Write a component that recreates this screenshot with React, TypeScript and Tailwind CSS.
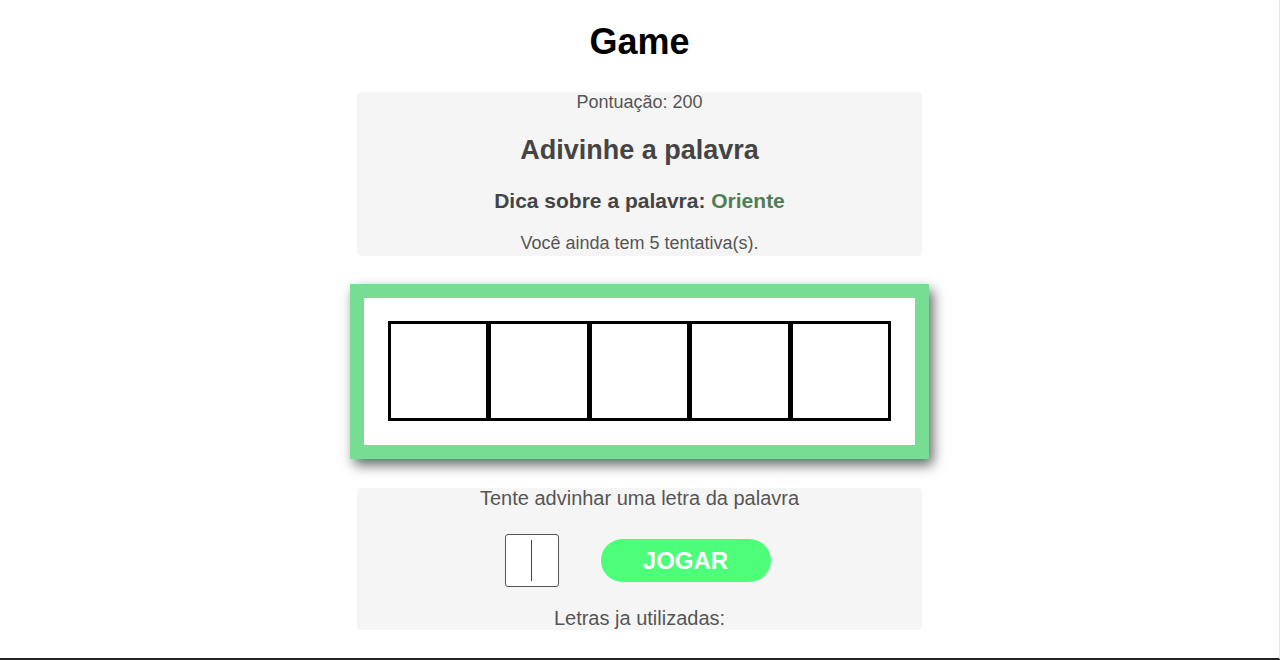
import React from "react";

export default function App() {
  return (
    <div
      className="h-[660px] w-full bg-white border-b-2 border-[#222] border-r border-r-[#e6e6e6] flex flex-col items-center overflow-hidden"
      style={{ fontFamily: '"Liberation Sans", Arial, sans-serif' }}
    >
      <h1 className="mt-[21px] text-[36px] leading-[41px] font-bold text-black">Game</h1>

      <div className="mt-[30px] w-[565px] h-[164px] bg-[#f5f5f5] rounded-[4px] flex flex-col items-center">
        <p className="text-[18px] leading-[21px] text-[#555]">Pontuação: 200</p>
        <h2 className="mt-[22px] text-[27px] leading-[31px] font-bold text-[#444]">Adivinhe a palavra</h2>
        <h3 className="mt-[23px] text-[21px] leading-[24px] font-bold text-[#444]">
          Dica sobre a palavra: <span className="text-[#4e7d58]">Oriente</span>
        </h3>
        <p className="mt-[20px] text-[18px] leading-[21px] text-[#555]">Você ainda tem 5 tentativa(s).</p>
      </div>

      <div className="mt-[28px] border-[14px] border-[#77dd93] bg-white pt-[23px] pb-[24px] px-[24px] shadow-[4px_6px_12px_rgba(0,0,0,0.6)]">
        <div className="flex w-[503px] h-[100px]">
          {[0, 1, 2, 3, 4].map((i) => (
            <div
              key={i}
              className={`flex-1 h-[100px] border-[3px] border-black bg-white ${i > 0 ? "-ml-px" : ""}`}
            />
          ))}
        </div>
      </div>

      <div className="mt-[29px] w-[565px] h-[142px] bg-[#f5f5f5] rounded-[4px] flex flex-col items-center">
        <p className="text-[20px] leading-[20px] text-[#555]">Tente advinhar uma letra da palavra</p>
        <div className="mt-[26px] pr-[4px] flex items-center gap-[42px]">
          <div className="w-[54px] h-[53px] bg-white border border-[#555] rounded-[3px] flex items-center justify-center">
            <span className="block w-px h-[41px] bg-[#444]" />
          </div>
          <button className="w-[170px] h-[43px] rounded-full bg-[#4dfe7b] text-white text-[24px] font-bold leading-none">
            JOGAR
          </button>
        </div>
        <p className="mt-[21px] text-[20px] leading-[20px] text-[#555]">Letras ja utilizadas:</p>
      </div>
    </div>
  );
}
